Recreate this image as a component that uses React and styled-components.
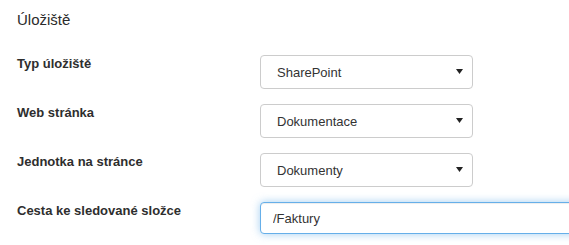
import React, { useEffect, useRef } from "react";
import styled, { createGlobalStyle } from "styled-components";

const Global = createGlobalStyle`
  html, body { margin: 0; padding: 0; background: #fff; overflow: hidden; }
  body { font-family: "Liberation Sans", Arial, sans-serif; color: #333; }
`;

const Panel = styled.section`
  width: 569px;
  overflow: clip;
  padding: 10px 0 12px 17px;
  box-sizing: border-box;
`;

const Title = styled.h3`
  margin: 0 0 25px;
  font-size: 15px;
  line-height: 20px;
  font-weight: 400;
  color: #2b2b2b;
`;

const Form = styled.div`
  display: grid;
  grid-template-columns: 243px 360px;
  row-gap: 15px;
`;

const Label = styled.label`
  font-size: 13px;
  line-height: 18px;
  font-weight: 700;
  color: #2e2e2e;
`;

const SelectWrap = styled.div`
  position: relative;
  width: 213px;
  height: 34px;
`;

const Select = styled.select`
  appearance: none;
  -webkit-appearance: none;
  box-sizing: border-box;
  width: 100%;
  height: 100%;
  margin: 0;
  padding: 0 30px 0 16px;
  border: 1px solid #ccc;
  border-radius: 4px;
  background: #fff;
  font-family: "Liberation Sans", Arial, sans-serif;
  font-size: 13px;
  color: #333;
  outline: none;
`;

const Arrow = styled.svg`
  position: absolute;
  right: 10px;
  top: 14px;
  width: 7px;
  height: 5px;
  pointer-events: none;
`;

const TextInput = styled.input`
  box-sizing: border-box;
  width: 360px;
  height: 32px;
  margin: 0;
  padding: 0 12px;
  border: 1px solid #66afe9;
  border-radius: 4px;
  background: #fff;
  font-family: "Liberation Sans", Arial, sans-serif;
  font-size: 13px;
  color: #333;
  outline: none;
  box-shadow: inset 0 1px 1px rgba(0, 0, 0, 0.075), 0 0 8px rgba(102, 175, 233, 0.6);
`;

function Dropdown({ value }) {
  return (
    <SelectWrap>
      <Select defaultValue={value}>
        <option>{value}</option>
      </Select>
      <Arrow viewBox="0 0 7 5">
        <polygon points="0,0 7,0 3.5,5" fill="#222" />
      </Arrow>
    </SelectWrap>
  );
}

export default function App() {
  const inputRef = useRef(null);
  useEffect(() => {
    const el = inputRef.current;
    if (el) {
      el.focus({ preventScroll: true });
      el.setSelectionRange(el.value.length, el.value.length);
    }
    window.scrollTo(0, 0);
  }, []);
  return (
    <>
      <Global />
      <Panel>
        <Title>Úložiště</Title>
        <Form>
          <Label>Typ úložiště</Label>
          <Dropdown value="SharePoint" />
          <Label>Web stránka</Label>
          <Dropdown value="Dokumentace" />
          <Label>Jednotka na stránce</Label>
          <Dropdown value="Dokumenty" />
          <Label>Cesta ke sledované složce</Label>
          <TextInput ref={inputRef} defaultValue="/Faktury" />
        </Form>
      </Panel>
    </>
  );
}
